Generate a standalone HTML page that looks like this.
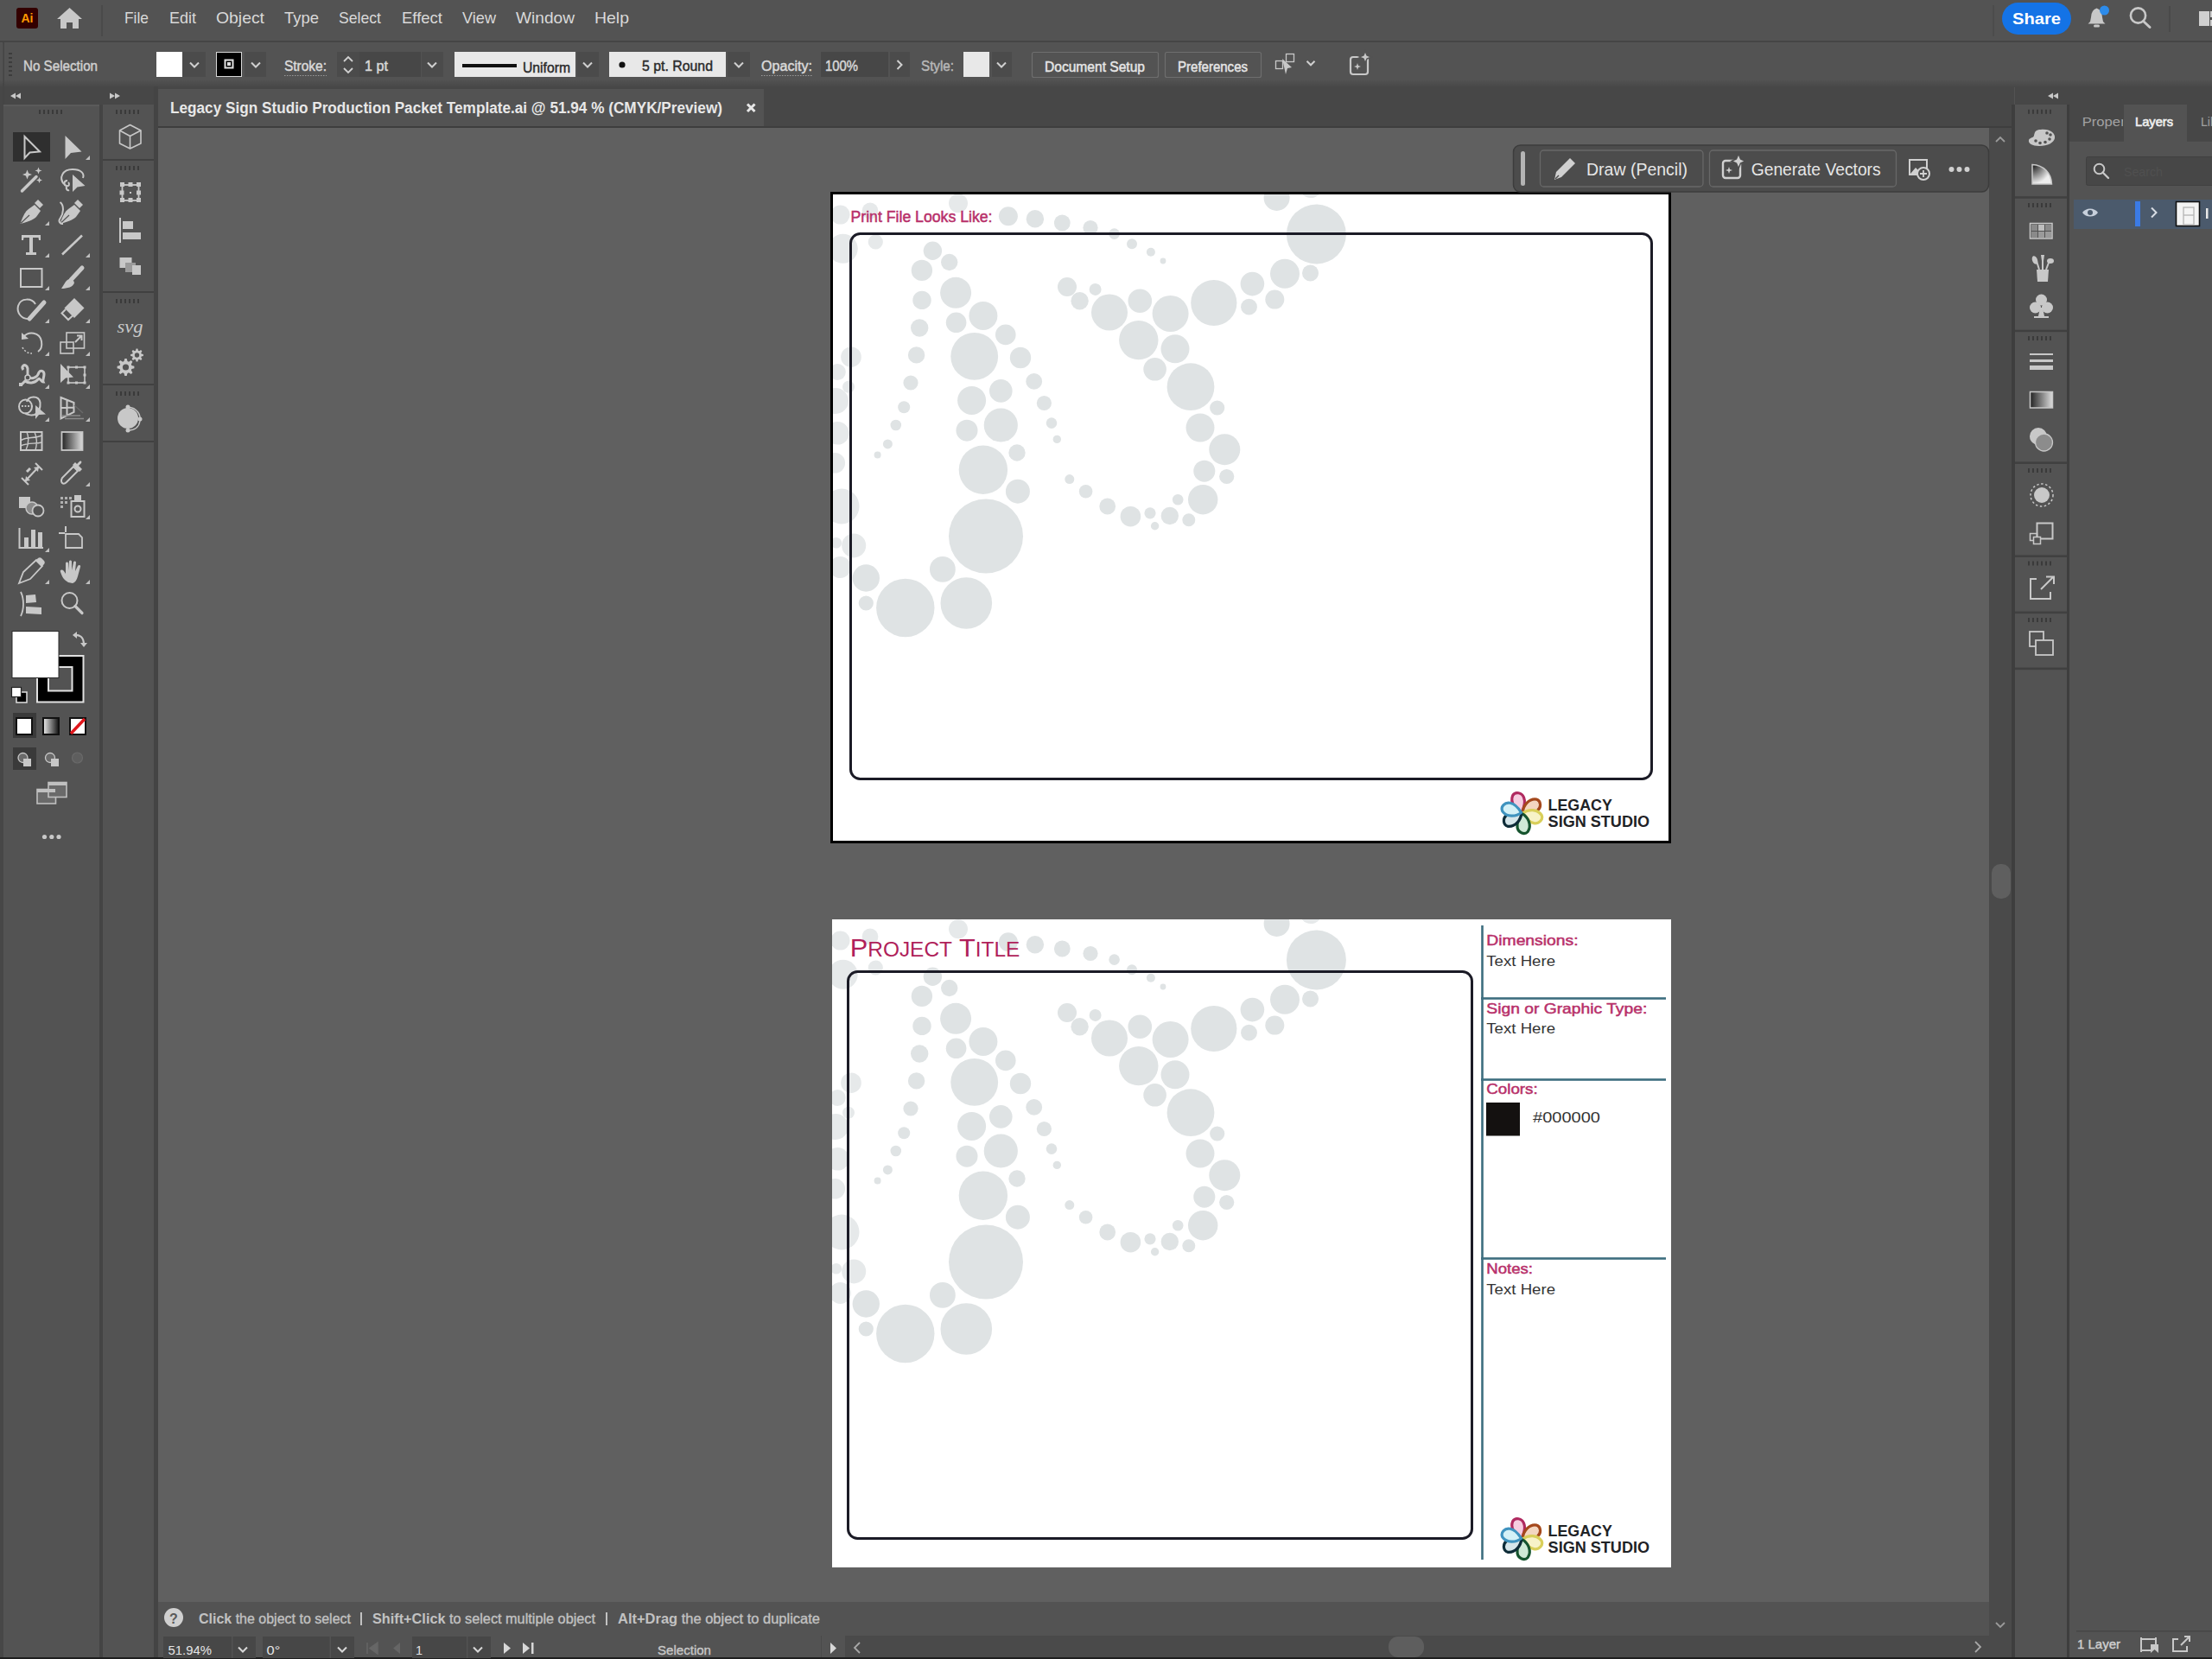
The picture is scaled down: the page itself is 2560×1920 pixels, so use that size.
<!DOCTYPE html>
<html><head><meta charset="utf-8"><title>Illustrator</title>
<style>
html,body{margin:0;padding:0;width:2560px;height:1920px;overflow:hidden;background:#535353}
svg{display:block;font-family:"Liberation Sans",sans-serif}
</style></head><body>
<svg width="2560" height="1920" viewBox="0 0 2560 1920">
<rect x="0" y="0" width="2560" height="47" fill="#535353" />
<rect x="0" y="47" width="2560" height="2" fill="#454545" />
<rect x="0" y="49" width="2560" height="52" fill="#535353" />
<defs><linearGradient id="cbg" x1="0" y1="0" x2="0" y2="1"><stop offset="0" stop-color="#535353"/><stop offset="1" stop-color="#474747"/></linearGradient></defs>
<rect x="0" y="92" width="2560" height="9" fill="url(#cbg)" />
<rect x="0" y="100" width="183" height="21" fill="#474747" />
<rect x="3" y="49" width="2" height="1871" fill="#454545" />
<rect x="0" y="121" width="4" height="1799" fill="#474747" />
<rect x="4" y="121" width="111" height="1799" fill="#535353" />
<rect x="115" y="121" width="4" height="1799" fill="#444444" />
<rect x="119" y="121" width="59" height="1799" fill="#535353" />
<rect x="178" y="100" width="5" height="1820" fill="#444444" />
<rect x="183" y="100" width="2148" height="48" fill="#474747" />
<rect x="183" y="103" width="701" height="44" fill="#535353" />
<rect x="183" y="146" width="2148" height="2" fill="#3e3e3e" />
<rect x="183" y="148" width="2119" height="1706" fill="#606060" />
<rect x="2302" y="148" width="27" height="1770" fill="#4a4a4a" />
<rect x="2328" y="121" width="4" height="1799" fill="#3e3e3e" />
<rect x="183" y="1854" width="2119" height="38" fill="#535353" />
<rect x="183" y="1892" width="2119" height="28" fill="#535353" />
<rect x="2332" y="100" width="228" height="21" fill="#474747" />
<rect x="2332" y="121" width="60" height="1799" fill="#535353" />
<rect x="2392" y="121" width="3" height="1799" fill="#3e3e3e" />
<rect x="2395" y="121" width="165" height="1799" fill="#535353" />
<rect x="0" y="1918" width="2560" height="2" fill="#1e1e1e" />
<rect x="19" y="9" width="25" height="24" rx="3" fill="#330000"/>
<text x="31.5" y="26" font-size="14" fill="#ff9a00" font-weight="bold" text-anchor="middle" >Ai</text>
<path d="M66 22 L80.5 9 L95 22 L91 22 L91 33 L84 33 L84 26 L77 26 L77 33 L70 33 L70 22 Z" fill="#c8c8c8"/>
<rect x="117" y="6" width="2" height="36" fill="#4a4a4a" />
<text x="144" y="27" font-size="19" fill="#d9d9d9" textLength="28" lengthAdjust="spacingAndGlyphs" >File</text>
<text x="196" y="27" font-size="19" fill="#d9d9d9" textLength="31" lengthAdjust="spacingAndGlyphs" >Edit</text>
<text x="250" y="27" font-size="19" fill="#d9d9d9" textLength="56" lengthAdjust="spacingAndGlyphs" >Object</text>
<text x="329" y="27" font-size="19" fill="#d9d9d9" textLength="40" lengthAdjust="spacingAndGlyphs" >Type</text>
<text x="392" y="27" font-size="19" fill="#d9d9d9" textLength="49" lengthAdjust="spacingAndGlyphs" >Select</text>
<text x="465" y="27" font-size="19" fill="#d9d9d9" textLength="47" lengthAdjust="spacingAndGlyphs" >Effect</text>
<text x="535" y="27" font-size="19" fill="#d9d9d9" textLength="39" lengthAdjust="spacingAndGlyphs" >View</text>
<text x="597" y="27" font-size="19" fill="#d9d9d9" textLength="68" lengthAdjust="spacingAndGlyphs" >Window</text>
<text x="688" y="27" font-size="19" fill="#d9d9d9" textLength="40" lengthAdjust="spacingAndGlyphs" >Help</text>
<rect x="2317" y="3" width="80" height="37" rx="18.5" fill="#1473e6"/>
<text x="2357" y="28" font-size="19" fill="#ffffff" font-weight="bold" text-anchor="middle" textLength="56" lengthAdjust="spacingAndGlyphs" >Share</text>
<rect x="2306" y="6" width="2" height="36" fill="#4c4c4c" />
<path d="M2426.5 9.5 Q2420 12 2420 20 L2419 25 L2416.5 27.5 L2436.5 27.5 L2434 25 L2433 20 Q2433 12 2426.5 9.5 Z" fill="#c8c8c8"/>
<rect x="2423" y="28.5" width="7" height="3" rx="1.5" fill="#c8c8c8"/>
<circle cx="2435.5" cy="12" r="5.5" fill="#2d8ceb"/>
<circle cx="2474.5" cy="18" r="8.6" fill="none" stroke="#c8c8c8" stroke-width="2.6"/>
<line x1="2480.5" y1="24.5" x2="2488" y2="31.5" stroke="#c8c8c8" stroke-width="3" stroke-linecap="round"/>
<rect x="2510" y="7" width="2" height="30" fill="#4a4a4a" />
<rect x="2545" y="13" width="12" height="17" fill="#d0d0d0" />
<rect x="2558" y="13" width="2" height="7" fill="#d0d0d0" />
<rect x="2558" y="23" width="2" height="7" fill="#d0d0d0" />
<rect x="3" y="50" width="1" height="46" fill="#4a4a4a" />
<rect x="10" y="61" width="4" height="2" fill="#3c3c3c" />
<rect x="10" y="66" width="4" height="2" fill="#3c3c3c" />
<rect x="10" y="71" width="4" height="2" fill="#3c3c3c" />
<rect x="10" y="76" width="4" height="2" fill="#3c3c3c" />
<rect x="10" y="81" width="4" height="2" fill="#3c3c3c" />
<rect x="10" y="86" width="4" height="2" fill="#3c3c3c" />
<text x="27" y="82" font-size="16" fill="#d0d0d0" textLength="86" lengthAdjust="spacingAndGlyphs" stroke="#d0d0d0" stroke-width="0.45" >No Selection</text>
<rect x="181" y="60" width="30" height="29" fill="#ffffff" />
<rect x="211" y="60" width="27" height="29" fill="#4b4b4b" />
<polyline points="220,72.5 225,77.5 230,72.5" fill="none" stroke="#d0d0d0" stroke-width="2"/>
<rect x="250.5" y="60.5" width="29" height="28" fill="#000" stroke="#d8d8d8" stroke-width="1"/>
<rect x="260.5" y="69.5" width="9" height="9" fill="none" stroke="#e0e0e0" stroke-width="2"/>
<rect x="263" y="72" width="4" height="4" fill="#e0e0e0" />
<rect x="283" y="60" width="25" height="29" fill="#4b4b4b" />
<polyline points="291,72.5 296,77.5 301,72.5" fill="none" stroke="#d0d0d0" stroke-width="2"/>
<text x="329" y="82" font-size="16" fill="#dadada" textLength="49" lengthAdjust="spacingAndGlyphs" stroke="#dadada" stroke-width="0.45" >Stroke:</text>
<line x1="329" y1="87.5" x2="378" y2="87.5" stroke="#9a9a9a" stroke-width="1" stroke-dasharray="1.5,1.5"/>
<rect x="390" y="60" width="26" height="29" fill="#4b4b4b" />
<polyline points="398,71 403,66 408,71" fill="none" stroke="#d0d0d0" stroke-width="1.8"/>
<polyline points="398,79 403,84 408,79" fill="none" stroke="#d0d0d0" stroke-width="1.8"/>
<rect x="416" y="60" width="71" height="29" fill="#474747" />
<text x="422" y="82" font-size="16" fill="#d8d8d8" textLength="27" lengthAdjust="spacingAndGlyphs" stroke="#d8d8d8" stroke-width="0.45" >1 pt</text>
<rect x="488" y="60" width="25" height="29" fill="#4b4b4b" />
<polyline points="495,72.5 500,77.5 505,72.5" fill="none" stroke="#d0d0d0" stroke-width="2"/>
<rect x="526" y="60" width="140" height="29" fill="#e8e8e8" />
<rect x="535" y="74" width="63" height="4" fill="#111111" />
<text x="605" y="84" font-size="17" fill="#2a2a2a" textLength="55" lengthAdjust="spacingAndGlyphs" stroke="#2a2a2a" stroke-width="0.45" >Uniform</text>
<rect x="668" y="60" width="25" height="29" fill="#4b4b4b" />
<polyline points="675,72.5 680,77.5 685,72.5" fill="none" stroke="#d0d0d0" stroke-width="2"/>
<rect x="705" y="60" width="135" height="29" fill="#e8e8e8" />
<circle cx="720" cy="75" r="3.6" fill="#111"/>
<text x="743" y="82" font-size="17" fill="#2a2a2a" textLength="82" lengthAdjust="spacingAndGlyphs" stroke="#2a2a2a" stroke-width="0.45" >5 pt. Round</text>
<rect x="842" y="60" width="26" height="29" fill="#4b4b4b" />
<polyline points="850,72.5 855,77.5 860,72.5" fill="none" stroke="#d0d0d0" stroke-width="2"/>
<text x="881" y="81.5" font-size="16" fill="#dadada" textLength="59" lengthAdjust="spacingAndGlyphs" stroke="#dadada" stroke-width="0.45" >Opacity:</text>
<line x1="881" y1="87.5" x2="940" y2="87.5" stroke="#9a9a9a" stroke-width="1" stroke-dasharray="1.5,1.5"/>
<rect x="950" y="60" width="78" height="29" fill="#474747" />
<text x="955" y="81.5" font-size="16" fill="#d8d8d8" textLength="38" lengthAdjust="spacingAndGlyphs" stroke="#d8d8d8" stroke-width="0.45" >100%</text>
<rect x="1030" y="60" width="23" height="29" fill="#4b4b4b" />
<polyline points="1038.5,70 1043.5,75 1038.5,80" fill="none" stroke="#d0d0d0" stroke-width="2"/>
<text x="1066" y="82" font-size="16" fill="#b8b8b8" textLength="38" lengthAdjust="spacingAndGlyphs" stroke="#b8b8b8" stroke-width="0.45" >Style:</text>
<rect x="1115" y="60" width="30" height="29" fill="#e8e8e8" />
<rect x="1148" y="60" width="23" height="29" fill="#4b4b4b" />
<polyline points="1154,72.5 1159,77.5 1164,72.5" fill="none" stroke="#d0d0d0" stroke-width="2"/>
<rect x="1194.5" y="60.5" width="146" height="29" rx="2" fill="none" stroke="#6e6e6e" stroke-width="1.2"/>
<text x="1209" y="83" font-size="16" fill="#e6e6e6" textLength="116" lengthAdjust="spacingAndGlyphs" stroke="#e6e6e6" stroke-width="0.45" >Document Setup</text>
<rect x="1348.5" y="60.5" width="111" height="29" rx="2" fill="none" stroke="#6e6e6e" stroke-width="1.2"/>
<text x="1363" y="83" font-size="16" fill="#e6e6e6" textLength="81" lengthAdjust="spacingAndGlyphs" stroke="#e6e6e6" stroke-width="0.45" >Preferences</text>
<rect x="1476.5" y="70.5" width="8" height="9" fill="none" stroke="#c8c8c8" stroke-width="1.3"/>
<rect x="1488.5" y="62.5" width="9" height="9" fill="none" stroke="#c8c8c8" stroke-width="1.3"/>
<path d="M1484 68 L1495 78 L1490 79 L1488 86 Z" fill="#c8c8c8"/>
<polyline points="1512.5,70.75 1517,75.25 1521.5,70.75" fill="none" stroke="#d0d0d0" stroke-width="2"/>
<rect x="1563" y="66" width="20" height="20" rx="3" fill="none" stroke="#c8c8c8" stroke-width="2.2"/>
<path d="M1580 59 L1582 64 L1587 66 L1582 68 L1580 73 L1578 68 L1573 66 L1578 64 Z" fill="#c8c8c8" stroke="#535353" stroke-width="1.5"/>
<path d="M1571 73 L1572 76 L1575 77 L1572 78 L1571 81 L1570 78 L1567 77 L1570 76 Z" fill="#c8c8c8"/>
<path d="M18 107.5 L12 111 L18 114.5 Z M24 107.5 L18 111 L24 114.5 Z" fill="#c8c8c8"/>
<path d="M127 107.5 L133 111 L127 114.5 Z M133 107.5 L139 111 L133 114.5 Z" fill="#c8c8c8"/>
<path d="M2376 107.5 L2370 111 L2376 114.5 Z M2382 107.5 L2376 111 L2382 114.5 Z" fill="#c8c8c8"/>
<text x="197" y="130.5" font-size="17.5" fill="#e8e8e8" font-weight="bold" textLength="639" lengthAdjust="spacingAndGlyphs" >Legacy Sign Studio Production Packet Template.ai @ 51.94 % (CMYK/Preview)</text>
<path d="M865 120.5 L873.5 129 M873.5 120.5 L865 129" stroke="#e8e8e8" stroke-width="3"/>
<rect x="4" y="121" width="111" height="2" fill="#5a5a5a" />
<rect x="45" y="127" width="2" height="5" fill="#3a3a3a"/><rect x="50" y="127" width="2" height="5" fill="#3a3a3a"/><rect x="55" y="127" width="2" height="5" fill="#3a3a3a"/><rect x="60" y="127" width="2" height="5" fill="#3a3a3a"/><rect x="65" y="127" width="2" height="5" fill="#3a3a3a"/><rect x="70" y="127" width="2" height="5" fill="#3a3a3a"/>
<rect x="15" y="153" width="43" height="34" fill="#2f2f2f" />
<path d="M28.5 158 L28.5 183 L34.5 176.5 L46 175.5 Z" fill="none" stroke="#c8c8c8" stroke-width="2" stroke-linejoin="miter"/>
<path d="M75.5 157 L75.5 184 L82 177 L94.5 175.5 Z" fill="#c8c8c8"/>
<path d="M104 185 L104 180 L99 185 Z" fill="#c0c0c0"/>
<line x1="25.5" y1="221" x2="42" y2="204.5" stroke="#c8c8c8" stroke-width="3.5" stroke-linecap="round"/>
<path d="M31.5 196.5 L33.04 200.46 L37.0 202 L33.04 203.54 L31.5 207.5 L29.96 203.54 L26.0 202 L29.96 200.46 Z" fill="#c8c8c8"/>
<path d="M44.5 193.5 L45.62 196.38 L48.5 197.5 L45.62 198.62 L44.5 201.5 L43.38 198.62 L40.5 197.5 L43.38 196.38 Z" fill="#c8c8c8"/>
<path d="M45.5 205.0 L46.48 207.52 L49.0 208.5 L46.48 209.48 L45.5 212.0 L44.52 209.48 L42.0 208.5 L44.52 207.52 Z" fill="#c8c8c8"/>
<path d="M74 213 C68 206 72 196 84 196 C94 196 98 201 96 206" fill="none" stroke="#c8c8c8" stroke-width="2"/>
<path d="M78 209 C74 209 73 214 77 215 C80 216 81 213 79 211 M77 215 C76 219 78 221 80 220" fill="none" stroke="#c8c8c8" stroke-width="2" stroke-width="1.8"/>
<path d="M84 202 L84 222 L89.5 216.5 L98.5 215 Z" fill="#c8c8c8"/>
<path d="M23.5 259 C26 251 29 245 33 242 L40 237 L47 244 L42 251 C38 255 31 257 23.5 259 Z" fill="#c8c8c8"/><path d="M40 235 L44 231 L50 237 L46 241 Z" fill="#c8c8c8"/><line x1="24" y1="258.5" x2="34" y2="249" stroke="#535353" stroke-width="1.2"/>
<path d="M57 261 L57 256 L52 261 Z" fill="#c0c0c0"/>
<path d="M69.5 259 C72 251 75 245 79 242 L86 237 L93 244 L88 251 C84 255 77 257 69.5 259 Z" fill="#c8c8c8"/><path d="M86 235 L90 231 L96 237 L92 241 Z" fill="#c8c8c8"/><line x1="70" y1="258.5" x2="80" y2="249" stroke="#535353" stroke-width="1.2"/>
<path d="M69.5 234 C75 238 73 248 70 252 C67 256 69 259 73 259" fill="none" stroke="#c8c8c8" stroke-width="2" stroke-width="1.8"/>
<path d="M25 272 L47 272 L47 278 L45 278 L44.5 275 L38 275 L38 292 L42 292 L42 295 L30 295 L30 292 L34 292 L34 275 L27.5 275 L27 278 L25 278 Z" fill="#c8c8c8"/>
<path d="M57 298 L57 293 L52 298 Z" fill="#c0c0c0"/>
<line x1="72" y1="294.5" x2="95" y2="272.5" stroke="#c8c8c8" stroke-width="2.6"/>
<path d="M104 298 L104 293 L99 298 Z" fill="#c0c0c0"/>
<rect x="24" y="311" width="24.5" height="21" fill="none" stroke="#c8c8c8" stroke-width="2"/>
<path d="M57 336 L57 331 L52 336 Z" fill="#c0c0c0"/>
<line x1="95" y1="310" x2="82" y2="324" stroke="#c8c8c8" stroke-width="5" stroke-linecap="round"/>
<path d="M71 334 L76 326 C79 322 84 322 86 327 C85 332 78 334 71 334 Z" fill="#c8c8c8"/>
<path d="M104 336 L104 331 L99 336 Z" fill="#c0c0c0"/>
<path d="M41 352 C37 345 24 344 21 354 C19 362 25 369 32 369" fill="none" stroke="#c8c8c8" stroke-width="2"/>
<line x1="51" y1="350" x2="34" y2="369" stroke="#c8c8c8" stroke-width="5" stroke-linecap="round"/>
<path d="M57 374 L57 369 L52 374 Z" fill="#c0c0c0"/>
<path d="M86 345 L97.5 356.5 L86 368 L74.5 356.5 Z" fill="#c8c8c8"/>
<path d="M76 358 L71.5 362.5 L79 370 L84 365.5" fill="none" stroke="#c8c8c8" stroke-width="2" stroke-width="1.8"/>
<path d="M104 374 L104 369 L99 374 Z" fill="#c0c0c0"/>
<path d="M27 390 C33 383 46 384 48 395 C49 401 47 405 44 407" fill="none" stroke="#c8c8c8" stroke-width="2"/>
<path d="M25 385 L25 393 L33 392 Z" fill="#c8c8c8"/>
<path d="M26 402 C28 406 32 409 37 409" fill="none" stroke="#c8c8c8" stroke-width="1.6" stroke-dasharray="2,2"/>
<path d="M57 412 L57 407 L52 412 Z" fill="#c0c0c0"/>
<rect x="70" y="396" width="15" height="13" fill="none" stroke="#c8c8c8" stroke-width="1.6"/>
<rect x="77" y="385" width="20.5" height="18" fill="none" stroke="#c8c8c8" stroke-width="1.6"/>
<path d="M87 396 L94 389 M89 388.5 L94.5 388.5 L94.5 394" fill="none" stroke="#c8c8c8" stroke-width="2" stroke-width="1.6"/>
<path d="M104 412 L104 407 L99 412 Z" fill="#c0c0c0"/>
<path d="M27 428 C24 424 28 421 31 424 C34 428 30 432 33 436 C37 440 44 436 45 431 C47 428 51 429 51 433 C51 437 49 440 50 442 C47 442 46 436 44 439 C40 444 33 444 29 441 L24 446" fill="none" stroke="#c8c8c8" stroke-width="3"/>
<circle cx="32" cy="437" r="3" fill="#535353" stroke="#c8c8c8" stroke-width="1.5"/>
<rect x="22" y="443" width="4" height="4" fill="#c8c8c8" />
<path d="M57 450 L57 445 L52 450 Z" fill="#c0c0c0"/>
<path d="M70 421 L70 443 L76 437.5 L85 436.5 Z" fill="#c8c8c8"/>
<rect x="79" y="425" width="19" height="18" fill="none" stroke="#c8c8c8" stroke-width="1.6"/>
<rect x="77.5" y="423.5" width="3" height="3" fill="#c8c8c8" />
<rect x="87.0" y="423.5" width="3" height="3" fill="#c8c8c8" />
<rect x="96.5" y="423.5" width="3" height="3" fill="#c8c8c8" />
<rect x="96.5" y="432.5" width="3" height="3" fill="#c8c8c8" />
<rect x="96.5" y="441.5" width="3" height="3" fill="#c8c8c8" />
<rect x="87.0" y="441.5" width="3" height="3" fill="#c8c8c8" />
<rect x="77.5" y="441.5" width="3" height="3" fill="#c8c8c8" />
<path d="M104 450 L104 445 L99 450 Z" fill="#c0c0c0"/>
<ellipse cx="29.5" cy="470.5" rx="7.5" ry="8" fill="none" stroke="#c8c8c8" stroke-width="2" stroke-width="1.6"/>
<path d="M31 465 C33 458 45 457 46.5 466 C47 472 46 477 40 480 C36 481 31 480 29 478" fill="none" stroke="#c8c8c8" stroke-width="2" stroke-width="1.6"/>
<path d="M25 470 L39 470" fill="none" stroke="#c8c8c8" stroke-width="1.8" stroke-dasharray="1.8,1.8"/>
<path d="M41 469 L41 485 L45 480 L53 479.5 Z" fill="#c8c8c8"/>
<path d="M57 488 L57 483 L52 488 Z" fill="#c0c0c0"/>
<path d="M70.5 460 L85.5 466 L85.5 477 L70.5 484.5 Z M77.5 463 L77.5 480.5 M70.5 472 L85.5 471.5" fill="none" stroke="#c8c8c8" stroke-width="2" stroke-width="1.6"/>
<path d="M72 481 L93 481 M75 484.5 L97 484.5" stroke="#8a8a8a" stroke-width="1.4"/>
<path d="M86 469 L96 478" stroke="#6a6a6a" stroke-width="1.4"/>
<path d="M104 488 L104 483 L99 488 Z" fill="#c0c0c0"/>
<rect x="24" y="500" width="24.5" height="21" fill="none" stroke="#c8c8c8" stroke-width="2"/>
<path d="M24 510 C30 505 40 508 48.5 504 M24 516 C32 512 40 514 48.5 512 M31 500 C34 507 33 514 30 521 M40 500 C43 507 43 514 41 521" fill="none" stroke="#c8c8c8" stroke-width="1.4"/>
<defs><linearGradient id="g1" x1="0" x2="1"><stop offset="0" stop-color="#222"/><stop offset="1" stop-color="#ddd"/></linearGradient><linearGradient id="g2" x1="0" x2="1"><stop offset="0" stop-color="#eee"/><stop offset="1" stop-color="#111"/></linearGradient><linearGradient id="g3" x1="0" x2="1" y1="0" y2="1"><stop offset="0" stop-color="#111"/><stop offset="1" stop-color="#eee"/></linearGradient></defs>
<rect x="71.5" y="500" width="24" height="21" fill="url(#g1)" stroke="#c8c8c8" stroke-width="1.8"/>
<path d="M25 553 L33 561 M41 536 L49 544 M29 557 L45 540" fill="none" stroke="#c8c8c8" stroke-width="2"/>
<path d="M45 540 L39 541 L44 546 Z M29 557 L35 556 L30 551 Z" fill="#c8c8c8"/>
<line x1="31" y1="546" x2="35" y2="542" stroke="#c8c8c8" stroke-width="3"/>
<path d="M72 559 C70 557 71 555 72 553 L85 540 L90 545 L77 558 C75 560 73 560 72 559 Z" fill="none" stroke="#c8c8c8" stroke-width="2" stroke-width="1.8"/>
<path d="M84 538 L92 546 L95 543 L91 539 L94 536 C95 534 94 533 92 534 L89 537 L87 535 Z" fill="#c8c8c8"/>
<path d="M104 563 L104 558 L99 563 Z" fill="#c0c0c0"/>
<rect x="22" y="575" width="13" height="13" fill="#c8c8c8" />
<circle cx="37" cy="588" r="7" fill="#8a8a8a" stroke="#c8c8c8" stroke-width="1.4"/>
<circle cx="44" cy="591" r="6.5" fill="#535353" stroke="#c8c8c8" stroke-width="1.8"/>
<rect x="70" y="575" width="3" height="3" fill="#b0b0b0" />
<rect x="75" y="575" width="3" height="3" fill="#b0b0b0" />
<rect x="80" y="575" width="3" height="3" fill="#b0b0b0" />
<rect x="70" y="580" width="3" height="3" fill="#b0b0b0" />
<rect x="75" y="580" width="3" height="3" fill="#b0b0b0" />
<rect x="70" y="585" width="3" height="3" fill="#b0b0b0" />
<rect x="82.5" y="580" width="15" height="18" fill="none" stroke="#c8c8c8" stroke-width="2" stroke-width="1.8"/>
<rect x="86" y="573" width="8" height="6" fill="#c8c8c8" />
<circle cx="90" cy="589" r="3.5" fill="none" stroke="#c8c8c8" stroke-width="2"/>
<path d="M104 601 L104 596 L99 601 Z" fill="#c0c0c0"/>
<path d="M22.5 611 L22.5 634 L50 634" fill="none" stroke="#c8c8c8" stroke-width="2"/>
<rect x="28" y="622" width="5" height="12" fill="#c8c8c8" />
<rect x="36" y="613" width="5" height="21" fill="#c8c8c8" />
<rect x="44" y="616" width="5" height="18" fill="#c8c8c8" />
<path d="M57 639 L57 634 L52 639 Z" fill="#c0c0c0"/>
<path d="M76 609 L76 616 M68 617 L75 617" fill="none" stroke="#c8c8c8" stroke-width="2"/>
<path d="M76 618 L91 618 L95 622 L95 634 L76 634 Z" fill="#5c5c5c" stroke="#c8c8c8" stroke-width="1.8"/>
<path d="M22 675 L27 662 L42 648 L49 655 L35 670 Z" fill="none" stroke="#c8c8c8" stroke-width="1.8"/>
<path d="M41 649 L44 646 C45 645 47 645 48 646 L51 649 C52 650 52 652 51 653 L48 656 Z" fill="#c8c8c8"/>
<path d="M57 676 L57 671 L52 676 Z" fill="#c0c0c0"/>
<path d="M79 674 C74 671 72 668 70 662 C69 659 72 659 74 661 L76 664 L76 652 C76 650 79 650 79 652 L79 660 L80 650 C80 648 83 648 83 650 L83 660 L85 651 C85 649 88 649 88 651 L87 661 L90 655 C91 653 94 654 93 656 L90 667 C89 671 87 674 84 675 Z" fill="#c8c8c8"/>
<path d="M104 676 L104 671 L99 676 Z" fill="#c0c0c0"/>
<path d="M24 685 C28 693 28 705 24 713" fill="none" stroke="#c8c8c8" stroke-width="1.8"/>
<path d="M30 689 L41 688 L42 697 L30 698 Z M30 702 L48 703 L48 711 L30 710 Z" fill="#c8c8c8"/>
<circle cx="80.5" cy="695" r="9" fill="none" stroke="#c8c8c8" stroke-width="2" stroke-width="2"/>
<line x1="87" y1="701.5" x2="95" y2="709.5" stroke="#c8c8c8" stroke-width="3.2" stroke-linecap="round"/>
<rect x="43" y="759" width="53.5" height="53.5" fill="#000" stroke="#e0e0e0" stroke-width="2"/>
<rect x="56" y="772" width="27.5" height="27.5" fill="#535353" stroke="#e0e0e0" stroke-width="2"/>
<rect x="14" y="730.5" width="54" height="54" fill="#ffffff" stroke="#2a2a2a" stroke-width="1"/>
<path d="M85 735 C92 734 97 737 97 746" fill="none" stroke="#c8c8c8" stroke-width="2.2"/>
<path d="M84 735 L89 731 L89 739 Z M97 749 L93 744 L101 744 Z" fill="#c8c8c8"/>
<rect x="19" y="801" width="12" height="12" fill="#000" stroke="#e0e0e0" stroke-width="1.5"/>
<rect x="13.5" y="795.5" width="11" height="11" fill="#fff" stroke="#222" stroke-width="1.2"/>
<rect x="15" y="825" width="27" height="29" fill="#3a3a3a" />
<rect x="19" y="831" width="18" height="19" fill="#fff" stroke="#111" stroke-width="2"/>
<rect x="50" y="831" width="18" height="19" fill="url(#g2)" stroke="#111" stroke-width="2"/>
<rect x="81" y="831" width="18" height="19" fill="#fff" stroke="#111" stroke-width="2"/>
<line x1="82" y1="849" x2="98" y2="832" stroke="#e0161b" stroke-width="3.5"/>
<rect x="15" y="865" width="27" height="26" fill="#3a3a3a" />
<circle cx="26.5" cy="877" r="5.5" fill="#6a6a6a" stroke="#c8c8c8" stroke-width="1.3"/>
<rect x="27" y="878" width="9" height="9" fill="#c8c8c8" />
<circle cx="58" cy="877" r="5.5" fill="#6a6a6a" stroke="#c8c8c8" stroke-width="1.3"/>
<rect x="59" y="878" width="9" height="9" fill="#c8c8c8" />
<circle cx="89.5" cy="877" r="6" fill="#5e5e5e" stroke="#6a6a6a" stroke-width="1.2"/>
<rect x="43" y="913.5" width="21.5" height="16.5" fill="#6a6a6a" stroke="#c0c0c0" stroke-width="1.6"/>
<rect x="56" y="905.5" width="21" height="17" fill="#6a6a6a" stroke="#c0c0c0" stroke-width="1.6"/>
<rect x="56" y="905" width="21" height="4" fill="#c0c0c0" />
<rect x="43" y="913" width="21" height="4" fill="#c0c0c0" />
<circle cx="51.5" cy="968.5" r="2.6" fill="#c8c8c8"/>
<circle cx="59.8" cy="968.5" r="2.6" fill="#c8c8c8"/>
<circle cx="68" cy="968.5" r="2.6" fill="#c8c8c8"/>
<rect x="119" y="121" width="59" height="63" fill="#535353" />
<rect x="119" y="184" width="59" height="2" fill="#404040" />
<rect x="134" y="127" width="2" height="5" fill="#3a3a3a"/><rect x="139" y="127" width="2" height="5" fill="#3a3a3a"/><rect x="144" y="127" width="2" height="5" fill="#3a3a3a"/><rect x="149" y="127" width="2" height="5" fill="#3a3a3a"/><rect x="154" y="127" width="2" height="5" fill="#3a3a3a"/><rect x="159" y="127" width="2" height="5" fill="#3a3a3a"/>
<rect x="119" y="186" width="59" height="151" fill="#535353" />
<rect x="119" y="337" width="59" height="2" fill="#404040" />
<rect x="134" y="192" width="2" height="5" fill="#3a3a3a"/><rect x="139" y="192" width="2" height="5" fill="#3a3a3a"/><rect x="144" y="192" width="2" height="5" fill="#3a3a3a"/><rect x="149" y="192" width="2" height="5" fill="#3a3a3a"/><rect x="154" y="192" width="2" height="5" fill="#3a3a3a"/><rect x="159" y="192" width="2" height="5" fill="#3a3a3a"/>
<rect x="119" y="340" width="59" height="104" fill="#535353" />
<rect x="119" y="444" width="59" height="2" fill="#404040" />
<rect x="134" y="346" width="2" height="5" fill="#3a3a3a"/><rect x="139" y="346" width="2" height="5" fill="#3a3a3a"/><rect x="144" y="346" width="2" height="5" fill="#3a3a3a"/><rect x="149" y="346" width="2" height="5" fill="#3a3a3a"/><rect x="154" y="346" width="2" height="5" fill="#3a3a3a"/><rect x="159" y="346" width="2" height="5" fill="#3a3a3a"/>
<rect x="119" y="447" width="59" height="63" fill="#535353" />
<rect x="119" y="510" width="59" height="2" fill="#404040" />
<rect x="134" y="453" width="2" height="5" fill="#3a3a3a"/><rect x="139" y="453" width="2" height="5" fill="#3a3a3a"/><rect x="144" y="453" width="2" height="5" fill="#3a3a3a"/><rect x="149" y="453" width="2" height="5" fill="#3a3a3a"/><rect x="154" y="453" width="2" height="5" fill="#3a3a3a"/><rect x="159" y="453" width="2" height="5" fill="#3a3a3a"/>
<path d="M150.5 144.5 L163 151 L163 166 L150.5 172 L138.5 166 L138.5 151 Z M138.5 151 L150.5 157.5 L163 151 M150.5 157.5 L150.5 172" fill="none" stroke="#c8c8c8" stroke-width="1.6" stroke-linejoin="round"/>
<rect x="141.5" y="214" width="19" height="18" fill="none" stroke="#c8c8c8" stroke-width="1.8"/>
<rect x="139.0" y="211" width="5" height="5" fill="#c8c8c8" />
<rect x="139.0" y="229" width="5" height="5" fill="#c8c8c8" />
<rect x="148.5" y="211" width="5" height="5" fill="#c8c8c8" />
<rect x="148.5" y="229" width="5" height="5" fill="#c8c8c8" />
<rect x="158.0" y="211" width="5" height="5" fill="#c8c8c8" />
<rect x="158.0" y="229" width="5" height="5" fill="#c8c8c8" />
<rect x="138.5" y="220.5" width="5" height="5" fill="#c8c8c8" />
<rect x="158" y="220.5" width="5" height="5" fill="#c8c8c8" />
<rect x="150" y="222" width="2" height="2" fill="#c8c8c8" />
<rect x="138" y="252" width="2" height="29" fill="#c8c8c8" />
<rect x="142" y="256" width="12" height="9" fill="#c8c8c8" />
<rect x="142" y="269" width="21" height="8" fill="#c8c8c8" />
<rect x="138.5" y="298" width="14" height="12" fill="#c8c8c8" />
<rect x="145" y="304" width="12" height="11" fill="#9a9a9a" />
<rect x="153" y="307" width="10" height="11" fill="#c8c8c8" />
<text x="150.5" y="385" font-size="22" fill="#c8c8c8" text-anchor="middle" textLength="30" lengthAdjust="spacingAndGlyphs" font-family="Liberation Serif" font-style="italic">svg</text>
<polygon points="155.4,423.8 155.4,426.2 152.4,427.0 151.8,428.5 153.4,431.2 151.7,432.9 149.0,431.3 147.5,431.9 146.7,434.9 144.3,434.9 143.5,431.9 142.0,431.3 139.3,432.9 137.6,431.2 139.2,428.5 138.6,427.0 135.6,426.2 135.6,423.8 138.6,423.0 139.2,421.5 137.6,418.8 139.3,417.1 142.0,418.7 143.5,418.1 144.3,415.1 146.7,415.1 147.5,418.1 149.0,418.7 151.7,417.1 153.4,418.8 151.8,421.5 152.4,423.0" fill="#c8c8c8"/><circle cx="145.5" cy="425" r="3.5999999999999996" fill="#535353"/>
<polygon points="165.9,410.1 165.9,411.9 163.7,412.5 163.2,413.6 164.4,415.6 163.1,416.9 161.1,415.7 160.0,416.2 159.4,418.4 157.6,418.4 157.0,416.2 155.9,415.7 153.9,416.9 152.6,415.6 153.8,413.6 153.3,412.5 151.1,411.9 151.1,410.1 153.3,409.5 153.8,408.4 152.6,406.4 153.9,405.1 155.9,406.3 157.0,405.8 157.6,403.6 159.4,403.6 160.0,405.8 161.1,406.3 163.1,405.1 164.4,406.4 163.2,408.4 163.7,409.5" fill="#c8c8c8"/><circle cx="158.5" cy="411" r="2.6999999999999997" fill="#535353"/>
<circle cx="148" cy="484" r="12" fill="#c8c8c8"/>
<path d="M148 470 C158 470 163 478 162 486 C161 493 156 498 148 498" fill="none" stroke="#535353" stroke-width="2"/>
<path d="M148 471 C159 472 163 480 162 487 C161 494 156 498 148 498" fill="none" stroke="#c8c8c8" stroke-width="1.4"/>
<circle cx="148" cy="471" r="2.5" fill="#c8c8c8"/><circle cx="162" cy="485" r="2.5" fill="#c8c8c8"/><circle cx="148" cy="498" r="2.5" fill="#c8c8c8"/>
<defs><clipPath id="ab1"><rect x="964" y="225" width="967" height="748"/></clipPath><clipPath id="ab2"><rect x="963" y="1064" width="971" height="750"/></clipPath></defs>
<rect x="961" y="222" width="973" height="754" fill="#000000" />
<rect x="964" y="225" width="967" height="748" fill="#ffffff" />
<g clip-path="url(#ab1)"><circle cx="969.4" cy="501.3" r="13.3" fill="#e6e9ea"/><circle cx="966.3" cy="535.8" r="11.8" fill="#e6e9ea"/><circle cx="974.1" cy="586" r="20.4" fill="#e6e9ea"/><circle cx="988.2" cy="631.4" r="14" fill="#e6e9ea"/><circle cx="967.8" cy="628.3" r="6.3" fill="#e6e9ea"/><circle cx="972.5" cy="656.5" r="12.5" fill="#e6e9ea"/><circle cx="975.7" cy="287.8" r="17" fill="#e6e9ea"/><circle cx="1013.3" cy="280" r="8.6" fill="#e6e9ea"/><circle cx="985" cy="413.2" r="11.8" fill="#e6e9ea"/><circle cx="969.4" cy="430.5" r="9.4" fill="#e6e9ea"/><circle cx="982" cy="447.7" r="7" fill="#e6e9ea"/><circle cx="967" cy="464" r="15" fill="#e6e9ea"/><circle cx="1109" cy="235.3" r="11" fill="#e6e9ea"/><circle cx="1007" cy="244" r="9.4" fill="#e6e9ea"/><circle cx="972.5" cy="248.6" r="11" fill="#e6e9ea"/><circle cx="1517" cy="216" r="13" fill="#e6e9ea"/><circle cx="1523.4" cy="271" r="34.5" fill="#dfe3e4"/><circle cx="1477.6" cy="229" r="15" fill="#dfe3e4"/><circle cx="1404.8" cy="350.5" r="26.6" fill="#dfe3e4"/><circle cx="1449.4" cy="328.6" r="13.8" fill="#dfe3e4"/><circle cx="1487" cy="316.8" r="17" fill="#dfe3e4"/><circle cx="1516.5" cy="316" r="9.5" fill="#dfe3e4"/><circle cx="1445.5" cy="355.2" r="9.4" fill="#dfe3e4"/><circle cx="1475.3" cy="346.6" r="11" fill="#dfe3e4"/><circle cx="1354.6" cy="363" r="21" fill="#dfe3e4"/><circle cx="1319.3" cy="348.2" r="13.8" fill="#dfe3e4"/><circle cx="1284" cy="361.5" r="21" fill="#dfe3e4"/><circle cx="1249.6" cy="348.2" r="10.2" fill="#dfe3e4"/><circle cx="1267.6" cy="334.9" r="7" fill="#dfe3e4"/><circle cx="1235" cy="332" r="11" fill="#dfe3e4"/><circle cx="1317.8" cy="393.6" r="22.7" fill="#dfe3e4"/><circle cx="1360" cy="403.8" r="16.5" fill="#dfe3e4"/><circle cx="1336.6" cy="427.3" r="13.3" fill="#dfe3e4"/><circle cx="1378" cy="447.7" r="27.4" fill="#dfe3e4"/><circle cx="1408.7" cy="472" r="8.6" fill="#dfe3e4"/><circle cx="1389" cy="495" r="16.5" fill="#dfe3e4"/><circle cx="1417.3" cy="520.2" r="18" fill="#dfe3e4"/><circle cx="1393.8" cy="545.2" r="12.5" fill="#dfe3e4"/><circle cx="1419.7" cy="551.5" r="8.6" fill="#dfe3e4"/><circle cx="1392.2" cy="578.2" r="17.2" fill="#dfe3e4"/><circle cx="1363.2" cy="578.2" r="6.3" fill="#dfe3e4"/><circle cx="1375.8" cy="601.7" r="7.5" fill="#dfe3e4"/><circle cx="1353.8" cy="597" r="10.2" fill="#dfe3e4"/><circle cx="1331" cy="593.8" r="6.6" fill="#dfe3e4"/><circle cx="1336.6" cy="608.7" r="4.7" fill="#dfe3e4"/><circle cx="1308.4" cy="597.7" r="11.8" fill="#dfe3e4"/><circle cx="1281.7" cy="586" r="9.4" fill="#dfe3e4"/><circle cx="1256.6" cy="568.7" r="7.8" fill="#dfe3e4"/><circle cx="1237.8" cy="554.6" r="5.5" fill="#dfe3e4"/><circle cx="1166.9" cy="250.2" r="11" fill="#dfe3e4"/><circle cx="1197.9" cy="253.3" r="10.2" fill="#dfe3e4"/><circle cx="1229.3" cy="258" r="9.4" fill="#dfe3e4"/><circle cx="1262" cy="263.5" r="8.6" fill="#dfe3e4"/><circle cx="1289.6" cy="270.6" r="6.3" fill="#dfe3e4"/><circle cx="1310" cy="282.3" r="6" fill="#dfe3e4"/><circle cx="1331.9" cy="291.7" r="5" fill="#dfe3e4"/><circle cx="1346" cy="302" r="3.4" fill="#dfe3e4"/><circle cx="1079.4" cy="290.2" r="10.7" fill="#dfe3e4"/><circle cx="1098.7" cy="303.5" r="9.7" fill="#dfe3e4"/><circle cx="1066.9" cy="312.9" r="12.2" fill="#dfe3e4"/><circle cx="1106.1" cy="338.8" r="18" fill="#dfe3e4"/><circle cx="1067" cy="347.4" r="10.7" fill="#dfe3e4"/><circle cx="1137.9" cy="365.4" r="16.5" fill="#dfe3e4"/><circle cx="1106.6" cy="373.3" r="11.8" fill="#dfe3e4"/><circle cx="1064.2" cy="379.5" r="10.2" fill="#dfe3e4"/><circle cx="1163.8" cy="387.4" r="11.8" fill="#dfe3e4"/><circle cx="1127.7" cy="412.4" r="27.4" fill="#dfe3e4"/><circle cx="1181" cy="414" r="12.2" fill="#dfe3e4"/><circle cx="1060.6" cy="410.9" r="9.7" fill="#dfe3e4"/><circle cx="1054" cy="443" r="8.6" fill="#dfe3e4"/><circle cx="1196.7" cy="441.4" r="9.4" fill="#dfe3e4"/><circle cx="1124.6" cy="463.4" r="16.5" fill="#dfe3e4"/><circle cx="1158.3" cy="452.4" r="13.3" fill="#dfe3e4"/><circle cx="1208.4" cy="466.5" r="8.6" fill="#dfe3e4"/><circle cx="1046.2" cy="471.2" r="7" fill="#dfe3e4"/><circle cx="1158.3" cy="492" r="19.6" fill="#dfe3e4"/><circle cx="1119" cy="498.2" r="12.5" fill="#dfe3e4"/><circle cx="1137.9" cy="543.7" r="28.2" fill="#dfe3e4"/><circle cx="1177" cy="524" r="9.7" fill="#dfe3e4"/><circle cx="1177.9" cy="568.7" r="14" fill="#dfe3e4"/><circle cx="1141" cy="620.5" r="43" fill="#dfe3e4"/><circle cx="1090.9" cy="658.9" r="14.9" fill="#dfe3e4"/><circle cx="1118.3" cy="698" r="29.8" fill="#dfe3e4"/><circle cx="1047.8" cy="703.5" r="33.7" fill="#dfe3e4"/><circle cx="1002.3" cy="669" r="15.7" fill="#dfe3e4"/><circle cx="1002.3" cy="698" r="8.6" fill="#dfe3e4"/><circle cx="1036.8" cy="492" r="6.3" fill="#dfe3e4"/><circle cx="1027.4" cy="513.9" r="5.5" fill="#dfe3e4"/><circle cx="1015.6" cy="526.4" r="4" fill="#dfe3e4"/><circle cx="1217" cy="489.6" r="6.3" fill="#dfe3e4"/><circle cx="1223.3" cy="508.4" r="4.7" fill="#dfe3e4"/></g>
<rect x="984.5" y="270.5" width="927" height="631" rx="11" fill="none" stroke="#1b1b26" stroke-width="3"/>
<text x="984.5" y="257" font-size="17.5" fill="#b8306a" textLength="164" lengthAdjust="spacingAndGlyphs" stroke="#b8306a" stroke-width="0.5" >Print File Looks Like:</text>
<g transform="translate(1761.5,940.7) rotate(-103)"><path d="M1 0 C5 -7 15 -11 22 -6 C26 -2 23 5 17 6 C11 7 6 4 1 0 Z" fill="#f6cde0" stroke="#b02a60" stroke-width="3.2" stroke-linejoin="round"/></g><g transform="translate(1761.5,940.7) rotate(-28)"><path d="M1 0 C5 -7 15 -11 22 -6 C26 -2 23 5 17 6 C11 7 6 4 1 0 Z" fill="#f3d6c0" stroke="#a4481c" stroke-width="3.2" stroke-linejoin="round"/></g><g transform="translate(1761.5,940.7) rotate(22)"><path d="M1 0 C5 -7 15 -11 22 -6 C26 -2 23 5 17 6 C11 7 6 4 1 0 Z" fill="#f7f2c8" stroke="#d9cf5a" stroke-width="3.2" stroke-linejoin="round"/></g><g transform="translate(1761.5,940.7) rotate(88)"><path d="M1 0 C5 -7 15 -11 22 -6 C26 -2 23 5 17 6 C11 7 6 4 1 0 Z" fill="#cfe9d6" stroke="#16542e" stroke-width="3.2" stroke-linejoin="round"/></g><g transform="translate(1761.5,940.7) rotate(152)"><path d="M1 0 C5 -7 15 -11 22 -6 C26 -2 23 5 17 6 C11 7 6 4 1 0 Z" fill="#d6e6ea" stroke="#0f2c38" stroke-width="3.2" stroke-linejoin="round"/></g><g transform="translate(1761.5,940.7) rotate(200)"><path d="M1 0 C5 -7 15 -11 22 -6 C26 -2 23 5 17 6 C11 7 6 4 1 0 Z" fill="#d4f1f7" stroke="#3f93bf" stroke-width="3.2" stroke-linejoin="round"/></g><text x="1791.6" y="937.8" font-size="18.7" fill="#1f2326" font-weight="bold" textLength="74.2" lengthAdjust="spacingAndGlyphs" >LEGACY</text><text x="1791.6" y="957.2" font-size="18.7" fill="#1f2326" font-weight="bold" textLength="117.4" lengthAdjust="spacingAndGlyphs" >SIGN STUDIO</text>
<rect x="963" y="1064" width="971" height="750" fill="#ffffff" />
<g clip-path="url(#ab2)"><circle cx="969.4" cy="1341.3" r="13.3" fill="#e6e9ea"/><circle cx="966.3" cy="1375.8" r="11.8" fill="#e6e9ea"/><circle cx="974.1" cy="1426" r="20.4" fill="#e6e9ea"/><circle cx="988.2" cy="1471.4" r="14" fill="#e6e9ea"/><circle cx="967.8" cy="1468.3" r="6.3" fill="#e6e9ea"/><circle cx="972.5" cy="1496.5" r="12.5" fill="#e6e9ea"/><circle cx="975.7" cy="1127.8" r="17" fill="#e6e9ea"/><circle cx="1013.3" cy="1120" r="8.6" fill="#e6e9ea"/><circle cx="985" cy="1253.2" r="11.8" fill="#e6e9ea"/><circle cx="969.4" cy="1270.5" r="9.4" fill="#e6e9ea"/><circle cx="982" cy="1287.7" r="7" fill="#e6e9ea"/><circle cx="967" cy="1304" r="15" fill="#e6e9ea"/><circle cx="1109" cy="1075.3" r="11" fill="#e6e9ea"/><circle cx="1007" cy="1084" r="9.4" fill="#e6e9ea"/><circle cx="972.5" cy="1088.6" r="11" fill="#e6e9ea"/><circle cx="1517" cy="1056" r="13" fill="#e6e9ea"/><circle cx="1523.4" cy="1111" r="34.5" fill="#dfe3e4"/><circle cx="1477.6" cy="1069" r="15" fill="#dfe3e4"/><circle cx="1404.8" cy="1190.5" r="26.6" fill="#dfe3e4"/><circle cx="1449.4" cy="1168.6" r="13.8" fill="#dfe3e4"/><circle cx="1487" cy="1156.8" r="17" fill="#dfe3e4"/><circle cx="1516.5" cy="1156" r="9.5" fill="#dfe3e4"/><circle cx="1445.5" cy="1195.2" r="9.4" fill="#dfe3e4"/><circle cx="1475.3" cy="1186.6" r="11" fill="#dfe3e4"/><circle cx="1354.6" cy="1203" r="21" fill="#dfe3e4"/><circle cx="1319.3" cy="1188.2" r="13.8" fill="#dfe3e4"/><circle cx="1284" cy="1201.5" r="21" fill="#dfe3e4"/><circle cx="1249.6" cy="1188.2" r="10.2" fill="#dfe3e4"/><circle cx="1267.6" cy="1174.9" r="7" fill="#dfe3e4"/><circle cx="1235" cy="1172" r="11" fill="#dfe3e4"/><circle cx="1317.8" cy="1233.6" r="22.7" fill="#dfe3e4"/><circle cx="1360" cy="1243.8" r="16.5" fill="#dfe3e4"/><circle cx="1336.6" cy="1267.3" r="13.3" fill="#dfe3e4"/><circle cx="1378" cy="1287.7" r="27.4" fill="#dfe3e4"/><circle cx="1408.7" cy="1312" r="8.6" fill="#dfe3e4"/><circle cx="1389" cy="1335" r="16.5" fill="#dfe3e4"/><circle cx="1417.3" cy="1360.2" r="18" fill="#dfe3e4"/><circle cx="1393.8" cy="1385.2" r="12.5" fill="#dfe3e4"/><circle cx="1419.7" cy="1391.5" r="8.6" fill="#dfe3e4"/><circle cx="1392.2" cy="1418.2" r="17.2" fill="#dfe3e4"/><circle cx="1363.2" cy="1418.2" r="6.3" fill="#dfe3e4"/><circle cx="1375.8" cy="1441.7" r="7.5" fill="#dfe3e4"/><circle cx="1353.8" cy="1437" r="10.2" fill="#dfe3e4"/><circle cx="1331" cy="1433.8" r="6.6" fill="#dfe3e4"/><circle cx="1336.6" cy="1448.7" r="4.7" fill="#dfe3e4"/><circle cx="1308.4" cy="1437.7" r="11.8" fill="#dfe3e4"/><circle cx="1281.7" cy="1426" r="9.4" fill="#dfe3e4"/><circle cx="1256.6" cy="1408.7" r="7.8" fill="#dfe3e4"/><circle cx="1237.8" cy="1394.6" r="5.5" fill="#dfe3e4"/><circle cx="1166.9" cy="1090.2" r="11" fill="#dfe3e4"/><circle cx="1197.9" cy="1093.3" r="10.2" fill="#dfe3e4"/><circle cx="1229.3" cy="1098" r="9.4" fill="#dfe3e4"/><circle cx="1262" cy="1103.5" r="8.6" fill="#dfe3e4"/><circle cx="1289.6" cy="1110.6" r="6.3" fill="#dfe3e4"/><circle cx="1310" cy="1122.3" r="6" fill="#dfe3e4"/><circle cx="1331.9" cy="1131.7" r="5" fill="#dfe3e4"/><circle cx="1346" cy="1142" r="3.4" fill="#dfe3e4"/><circle cx="1079.4" cy="1130.2" r="10.7" fill="#dfe3e4"/><circle cx="1098.7" cy="1143.5" r="9.7" fill="#dfe3e4"/><circle cx="1066.9" cy="1152.9" r="12.2" fill="#dfe3e4"/><circle cx="1106.1" cy="1178.8" r="18" fill="#dfe3e4"/><circle cx="1067" cy="1187.4" r="10.7" fill="#dfe3e4"/><circle cx="1137.9" cy="1205.4" r="16.5" fill="#dfe3e4"/><circle cx="1106.6" cy="1213.3" r="11.8" fill="#dfe3e4"/><circle cx="1064.2" cy="1219.5" r="10.2" fill="#dfe3e4"/><circle cx="1163.8" cy="1227.4" r="11.8" fill="#dfe3e4"/><circle cx="1127.7" cy="1252.4" r="27.4" fill="#dfe3e4"/><circle cx="1181" cy="1254" r="12.2" fill="#dfe3e4"/><circle cx="1060.6" cy="1250.9" r="9.7" fill="#dfe3e4"/><circle cx="1054" cy="1283" r="8.6" fill="#dfe3e4"/><circle cx="1196.7" cy="1281.4" r="9.4" fill="#dfe3e4"/><circle cx="1124.6" cy="1303.4" r="16.5" fill="#dfe3e4"/><circle cx="1158.3" cy="1292.4" r="13.3" fill="#dfe3e4"/><circle cx="1208.4" cy="1306.5" r="8.6" fill="#dfe3e4"/><circle cx="1046.2" cy="1311.2" r="7" fill="#dfe3e4"/><circle cx="1158.3" cy="1332" r="19.6" fill="#dfe3e4"/><circle cx="1119" cy="1338.2" r="12.5" fill="#dfe3e4"/><circle cx="1137.9" cy="1383.7" r="28.2" fill="#dfe3e4"/><circle cx="1177" cy="1364" r="9.7" fill="#dfe3e4"/><circle cx="1177.9" cy="1408.7" r="14" fill="#dfe3e4"/><circle cx="1141" cy="1460.5" r="43" fill="#dfe3e4"/><circle cx="1090.9" cy="1498.9" r="14.9" fill="#dfe3e4"/><circle cx="1118.3" cy="1538" r="29.8" fill="#dfe3e4"/><circle cx="1047.8" cy="1543.5" r="33.7" fill="#dfe3e4"/><circle cx="1002.3" cy="1509" r="15.7" fill="#dfe3e4"/><circle cx="1002.3" cy="1538" r="8.6" fill="#dfe3e4"/><circle cx="1036.8" cy="1332" r="6.3" fill="#dfe3e4"/><circle cx="1027.4" cy="1353.9" r="5.5" fill="#dfe3e4"/><circle cx="1015.6" cy="1366.4" r="4" fill="#dfe3e4"/><circle cx="1217" cy="1329.6" r="6.3" fill="#dfe3e4"/><circle cx="1223.3" cy="1348.4" r="4.7" fill="#dfe3e4"/></g>
<rect x="981.5" y="1124.5" width="722" height="656" rx="11" fill="none" stroke="#1b1b26" stroke-width="3"/>
<text x="983.7" y="1106.6" fill="#b01f5a" font-size="29.6" textLength="196.7" lengthAdjust="spacingAndGlyphs">P<tspan font-size="23.5">ROJECT</tspan> T<tspan font-size="23.5">ITLE</tspan></text>
<rect x="1714.2" y="1071" width="2.6" height="734" fill="#3d6e7f" />
<rect x="1714" y="1154.2" width="214" height="2.6" fill="#3d6e7f" />
<rect x="1714" y="1248.2" width="214" height="2.6" fill="#3d6e7f" />
<rect x="1714" y="1455.2" width="214" height="2.6" fill="#3d6e7f" />
<text x="1720.3" y="1094" font-size="17" fill="#b8306a" textLength="106.3" lengthAdjust="spacingAndGlyphs" stroke="#b8306a" stroke-width="0.5" >Dimensions:</text>
<text x="1720.3" y="1117.6" font-size="16.5" fill="#333333" textLength="79.7" lengthAdjust="spacingAndGlyphs" >Text Here</text>
<text x="1720.3" y="1172.5" font-size="17" fill="#b8306a" textLength="186" lengthAdjust="spacingAndGlyphs" stroke="#b8306a" stroke-width="0.5" >Sign or Graphic Type:</text>
<text x="1720.3" y="1196.2" font-size="16.5" fill="#333333" textLength="79.7" lengthAdjust="spacingAndGlyphs" >Text Here</text>
<text x="1720.3" y="1266" font-size="17" fill="#b8306a" textLength="59.4" lengthAdjust="spacingAndGlyphs" stroke="#b8306a" stroke-width="0.5" >Colors:</text>
<rect x="1720" y="1276" width="39" height="38.5" fill="#141110" />
<text x="1774" y="1299" font-size="17" fill="#333333" textLength="78" lengthAdjust="spacingAndGlyphs" >#000000</text>
<text x="1720.3" y="1473.5" font-size="17" fill="#b8306a" textLength="53.7" lengthAdjust="spacingAndGlyphs" stroke="#b8306a" stroke-width="0.5" >Notes:</text>
<text x="1720.3" y="1497.8" font-size="16.5" fill="#333333" textLength="79.7" lengthAdjust="spacingAndGlyphs" >Text Here</text>
<g transform="translate(1761.5,1780.7) rotate(-103)"><path d="M1 0 C5 -7 15 -11 22 -6 C26 -2 23 5 17 6 C11 7 6 4 1 0 Z" fill="#f6cde0" stroke="#b02a60" stroke-width="3.2" stroke-linejoin="round"/></g><g transform="translate(1761.5,1780.7) rotate(-28)"><path d="M1 0 C5 -7 15 -11 22 -6 C26 -2 23 5 17 6 C11 7 6 4 1 0 Z" fill="#f3d6c0" stroke="#a4481c" stroke-width="3.2" stroke-linejoin="round"/></g><g transform="translate(1761.5,1780.7) rotate(22)"><path d="M1 0 C5 -7 15 -11 22 -6 C26 -2 23 5 17 6 C11 7 6 4 1 0 Z" fill="#f7f2c8" stroke="#d9cf5a" stroke-width="3.2" stroke-linejoin="round"/></g><g transform="translate(1761.5,1780.7) rotate(88)"><path d="M1 0 C5 -7 15 -11 22 -6 C26 -2 23 5 17 6 C11 7 6 4 1 0 Z" fill="#cfe9d6" stroke="#16542e" stroke-width="3.2" stroke-linejoin="round"/></g><g transform="translate(1761.5,1780.7) rotate(152)"><path d="M1 0 C5 -7 15 -11 22 -6 C26 -2 23 5 17 6 C11 7 6 4 1 0 Z" fill="#d6e6ea" stroke="#0f2c38" stroke-width="3.2" stroke-linejoin="round"/></g><g transform="translate(1761.5,1780.7) rotate(200)"><path d="M1 0 C5 -7 15 -11 22 -6 C26 -2 23 5 17 6 C11 7 6 4 1 0 Z" fill="#d4f1f7" stroke="#3f93bf" stroke-width="3.2" stroke-linejoin="round"/></g><text x="1791.6" y="1777.8" font-size="18.7" fill="#1f2326" font-weight="bold" textLength="74.2" lengthAdjust="spacingAndGlyphs" >LEGACY</text><text x="1791.6" y="1797.2" font-size="18.7" fill="#1f2326" font-weight="bold" textLength="117.4" lengthAdjust="spacingAndGlyphs" >SIGN STUDIO</text>
<rect x="1751.5" y="168" width="550" height="54" rx="8" fill="#4c4c4c" stroke="#3c3c3c" stroke-width="1.5"/>
<rect x="1760" y="175" width="5" height="40" rx="2.5" fill="#b4b4b4"/>
<rect x="1782.5" y="174" width="188.5" height="42" rx="4" fill="#4c4c4c" stroke="#686868" stroke-width="1.3"/>
<path d="M1799 208 L1801 199 L1817 183 L1823 189 L1807 205 Z" fill="#d0d0d0"/><path d="M1800 207 L1804 203" stroke="#4c4c4c" stroke-width="1.5"/>
<text x="1836" y="203.3" font-size="20" fill="#e6e6e6" textLength="117" lengthAdjust="spacingAndGlyphs" >Draw (Pencil)</text>
<rect x="1978.5" y="174" width="216" height="42" rx="4" fill="#4c4c4c" stroke="#686868" stroke-width="1.3"/>
<rect x="1994" y="186" width="20" height="20" rx="3" fill="none" stroke="#d0d0d0" stroke-width="2.4"/>
<path d="M2012 178 L2014.5 184 L2020 186.5 L2014.5 189 L2012 195 L2009.5 189 L2004 186.5 L2009.5 184 Z" fill="#d0d0d0" stroke="#4c4c4c" stroke-width="1.5"/>
<path d="M2001 193 L2002 196 L2005 197 L2002 198 L2001 201 L2000 198 L1997 197 L2000 196 Z" fill="#d0d0d0"/>
<text x="2026.7" y="203.3" font-size="20" fill="#e6e6e6" textLength="150" lengthAdjust="spacingAndGlyphs" >Generate Vectors</text>
<rect x="2210" y="185" width="20" height="17" fill="none" stroke="#d0d0d0" stroke-width="2"/><path d="M2211 201 L2217 194 L2221 198 L2223 196 L2229 201 Z" fill="#d0d0d0"/>
<circle cx="2226" cy="201" r="7" fill="#4c4c4c" stroke="#d0d0d0" stroke-width="2"/><path d="M2226 197 L2226 205 M2222 201 L2230 201" stroke="#d0d0d0" stroke-width="1.8"/>
<circle cx="2258.5" cy="196" r="3" fill="#d0d0d0"/>
<circle cx="2267.5" cy="196" r="3" fill="#d0d0d0"/>
<circle cx="2276.5" cy="196" r="3" fill="#d0d0d0"/>
<rect x="2305" y="1000" width="22" height="40" rx="10" fill="#5f5f5f"/>
<polyline points="2310,164 2315,159 2320,164" fill="none" stroke="#9a9a9a" stroke-width="1.8"/>
<polyline points="2310,1878 2315,1883 2320,1878" fill="none" stroke="#9a9a9a" stroke-width="1.8"/>
<rect x="2332" y="227.2" width="60" height="2.5" fill="#404040" />
<rect x="2347" y="126.75" width="2" height="5" fill="#3a3a3a"/><rect x="2352" y="126.75" width="2" height="5" fill="#3a3a3a"/><rect x="2357" y="126.75" width="2" height="5" fill="#3a3a3a"/><rect x="2362" y="126.75" width="2" height="5" fill="#3a3a3a"/><rect x="2367" y="126.75" width="2" height="5" fill="#3a3a3a"/><rect x="2372" y="126.75" width="2" height="5" fill="#3a3a3a"/>
<rect x="2332" y="381.7" width="60" height="2.5" fill="#404040" />
<rect x="2347" y="235" width="2" height="5" fill="#3a3a3a"/><rect x="2352" y="235" width="2" height="5" fill="#3a3a3a"/><rect x="2357" y="235" width="2" height="5" fill="#3a3a3a"/><rect x="2362" y="235" width="2" height="5" fill="#3a3a3a"/><rect x="2367" y="235" width="2" height="5" fill="#3a3a3a"/><rect x="2372" y="235" width="2" height="5" fill="#3a3a3a"/>
<rect x="2332" y="534.4" width="60" height="2.5" fill="#404040" />
<rect x="2347" y="389" width="2" height="5" fill="#3a3a3a"/><rect x="2352" y="389" width="2" height="5" fill="#3a3a3a"/><rect x="2357" y="389" width="2" height="5" fill="#3a3a3a"/><rect x="2362" y="389" width="2" height="5" fill="#3a3a3a"/><rect x="2367" y="389" width="2" height="5" fill="#3a3a3a"/><rect x="2372" y="389" width="2" height="5" fill="#3a3a3a"/>
<rect x="2332" y="642.4" width="60" height="2.5" fill="#404040" />
<rect x="2347" y="542" width="2" height="5" fill="#3a3a3a"/><rect x="2352" y="542" width="2" height="5" fill="#3a3a3a"/><rect x="2357" y="542" width="2" height="5" fill="#3a3a3a"/><rect x="2362" y="542" width="2" height="5" fill="#3a3a3a"/><rect x="2367" y="542" width="2" height="5" fill="#3a3a3a"/><rect x="2372" y="542" width="2" height="5" fill="#3a3a3a"/>
<rect x="2332" y="707.6" width="60" height="2.5" fill="#404040" />
<rect x="2347" y="649.5" width="2" height="5" fill="#3a3a3a"/><rect x="2352" y="649.5" width="2" height="5" fill="#3a3a3a"/><rect x="2357" y="649.5" width="2" height="5" fill="#3a3a3a"/><rect x="2362" y="649.5" width="2" height="5" fill="#3a3a3a"/><rect x="2367" y="649.5" width="2" height="5" fill="#3a3a3a"/><rect x="2372" y="649.5" width="2" height="5" fill="#3a3a3a"/>
<rect x="2332" y="772.6" width="60" height="2.5" fill="#404040" />
<rect x="2347" y="715" width="2" height="5" fill="#3a3a3a"/><rect x="2352" y="715" width="2" height="5" fill="#3a3a3a"/><rect x="2357" y="715" width="2" height="5" fill="#3a3a3a"/><rect x="2362" y="715" width="2" height="5" fill="#3a3a3a"/><rect x="2367" y="715" width="2" height="5" fill="#3a3a3a"/><rect x="2372" y="715" width="2" height="5" fill="#3a3a3a"/>
<path d="M2362 150 C2372 149 2379 154 2378 160 C2377 165 2370 169 2360 169 C2352 169 2347 166 2348 162 C2349 159 2353 160 2354 157 C2355 152 2356 150 2362 150 Z" fill="#c8c8c8"/>
<circle cx="2356" cy="163" r="1.8" fill="#535353"/>
<circle cx="2361" cy="165.5" r="1.8" fill="#535353"/>
<circle cx="2367" cy="164.5" r="1.8" fill="#535353"/>
<circle cx="2372" cy="161" r="1.8" fill="#535353"/>
<circle cx="2373" cy="156" r="1.8" fill="#535353"/>
<circle cx="2369" cy="154" r="1.8" fill="#535353"/>
<defs><radialGradient id="rg1" cx="0" cy="0" r="1" gradientUnits="objectBoundingBox"><stop offset="0" stop-color="#111"/><stop offset="1" stop-color="#eee"/></radialGradient></defs>
<path d="M2352 190.5 C2365 191 2374 200 2374.5 213 L2352 213 Z" fill="url(#rg1)" stroke="#c8c8c8" stroke-width="1.5"/>
<rect x="2349.5" y="258.5" width="25.5" height="17.5" fill="none" stroke="#c8c8c8" stroke-width="1.5"/>
<rect x="2351" y="260" width="7" height="7" fill="#8a8a8a" />
<rect x="2359" y="260" width="7" height="7" fill="#bdbdbd" />
<rect x="2367" y="260" width="7" height="7" fill="#8a8a8a" />
<rect x="2351" y="268" width="7" height="7" fill="#8a8a8a" />
<rect x="2359" y="268" width="7" height="7" fill="#9a9a9a" />
<rect x="2367" y="268" width="7" height="7" fill="#9a9a9a" />
<path d="M2357 312 L2371 312 L2370 326 L2358 326 Z" fill="#c8c8c8"/>
<path d="M2360 312 L2357 302 M2364 312 L2364 297 M2368 312 L2371 304" fill="none" stroke="#c8c8c8" stroke-width="2" stroke-width="1.6"/>
<ellipse cx="2355" cy="301" rx="3" ry="5" fill="#c8c8c8" transform="rotate(-20 2355 301)"/><path d="M2362 295 L2366 295 L2365 302 L2363 302 Z" fill="#c8c8c8"/><ellipse cx="2373" cy="302" rx="4" ry="3" fill="#c8c8c8"/>
<circle cx="2362.5" cy="347" r="6.5" fill="#c8c8c8"/><circle cx="2355.5" cy="356" r="6.5" fill="#c8c8c8"/><circle cx="2369.5" cy="356" r="6.5" fill="#c8c8c8"/>
<path d="M2361 356 L2359 366 L2366 366 L2364 356 Z" fill="#c8c8c8"/><rect x="2354" y="366" width="17" height="2" fill="#c8c8c8"/>
<rect x="2349" y="409" width="27" height="2" fill="#c8c8c8" />
<rect x="2349" y="416" width="27" height="3" fill="#c8c8c8" />
<rect x="2349" y="423" width="27" height="5" fill="#c8c8c8" />
<rect x="2349.5" y="453.5" width="26" height="18.5" fill="url(#g1)" stroke="#c8c8c8" stroke-width="1.5"/>
<circle cx="2359" cy="505" r="10" fill="#c8c8c8"/><circle cx="2365.5" cy="512" r="10" fill="#8c8c8c" stroke="#c8c8c8" stroke-width="1.3"/>
<circle cx="2363" cy="573" r="9" fill="#c8c8c8"/><circle cx="2363" cy="573" r="13" fill="none" stroke="#c8c8c8" stroke-width="1.5" stroke-dasharray="2.5,2.5"/>
<rect x="2357.5" y="605.5" width="18" height="18" fill="none" stroke="#c8c8c8" stroke-width="2" stroke-width="1.5"/>
<rect x="2349.5" y="617.5" width="8" height="8" fill="none" stroke="#c8c8c8" stroke-width="1.5"/><rect x="2353.5" y="621.5" width="8" height="8" fill="#535353" stroke="#c8c8c8" stroke-width="1.5"/>
<path d="M2357 670 L2350 670 L2350 693 L2373 693 L2373 685" fill="none" stroke="#c8c8c8" stroke-width="2" stroke-width="2.4"/>
<path d="M2362 682 L2376 668 M2368 667.5 L2377 667.5 L2377 676" fill="none" stroke="#c8c8c8" stroke-width="2" stroke-width="2.4"/>
<rect x="2349" y="731" width="16" height="17" fill="none" stroke="#c8c8c8" stroke-width="1.8"/>
<rect x="2356" y="741" width="20" height="17" fill="#535353" stroke="#c8c8c8" stroke-width="1.8"/>
<rect x="2395" y="121" width="63" height="43" fill="#474747" />
<rect x="2531" y="121" width="29" height="43" fill="#474747" />
<rect x="2395" y="163" width="165" height="1" fill="#4a4a4a" />
<rect x="2458" y="121" width="73" height="43" fill="#535353" />
<svg x="2395" y="121" width="62" height="43" style="overflow:hidden"><text x="14.7" y="24.7" font-size="14.5" fill="#a2a2a2" textLength="50" lengthAdjust="spacingAndGlyphs" >Proper</text></svg>
<text x="2471" y="145.7" font-size="14.5" fill="#f0f0f0" textLength="44" lengthAdjust="spacingAndGlyphs" stroke="#f0f0f0" stroke-width="0.6" >Layers</text>
<text x="2547" y="145.7" font-size="14.5" fill="#a2a2a2" textLength="14" lengthAdjust="spacingAndGlyphs" >Lil</text>
<rect x="2414.5" y="181.5" width="150" height="33" rx="2" fill="#474747" stroke="#404040" stroke-width="1"/>
<circle cx="2429.5" cy="195.5" r="5.8" fill="none" stroke="#c8c8c8" stroke-width="2"/><line x1="2433.5" y1="199.5" x2="2440" y2="206" stroke="#c8c8c8" stroke-width="2.4" stroke-linecap="round"/>
<text x="2458" y="204" font-size="15" fill="#505050" textLength="45" lengthAdjust="spacingAndGlyphs" >Search</text>
<rect x="2400" y="231" width="160" height="34" fill="#4b5a6c" />
<path d="M2410 246 C2414 240 2424 240 2428 246 C2424 252 2414 252 2410 246 Z" fill="#c8d0dc"/><circle cx="2419" cy="246" r="3" fill="#4b5a6c"/>
<rect x="2471" y="233" width="6" height="29" fill="#3b7be6" />
<polyline points="2490,240.5 2495.5,246 2490,251.5" fill="none" stroke="#d8dde4" stroke-width="2"/>
<rect x="2518.5" y="233.5" width="27" height="28" fill="#f4f4f4" stroke="#111" stroke-width="1.6"/>
<rect x="2527" y="240" width="12" height="20" fill="none" stroke="#b8b8b8" stroke-width="1.4"/><line x1="2527" y1="249" x2="2539" y2="249" stroke="#b8b8b8" stroke-width="1.4"/>
<rect x="2553" y="241" width="2.5" height="12" fill="#e8e8e8" />
<rect x="2403" y="1887" width="157" height="1.5" fill="#474747" />
<text x="2404" y="1908" font-size="15" fill="#d0d0d0" textLength="50" lengthAdjust="spacingAndGlyphs" stroke="#d0d0d0" stroke-width="0.4" >1 Layer</text>
<path d="M2478 1895 L2478 1912 M2478 1897 L2495 1897 M2478 1910 L2490 1910 M2495 1895 L2495 1903" fill="none" stroke="#c8c8c8" stroke-width="2" stroke-width="1.8"/>
<path d="M2489 1903 L2498 1903 L2498 1913 L2493.5 1909 L2489 1913 Z" fill="#c8c8c8"/>
<path d="M2521 1897 L2515 1897 L2515 1911 L2531 1911 L2531 1905" fill="none" stroke="#c8c8c8" stroke-width="2" stroke-width="1.8"/><path d="M2524 1904 L2534 1894 M2528 1894 L2534 1894 L2534 1900" fill="none" stroke="#c8c8c8" stroke-width="2" stroke-width="1.8"/>
<circle cx="201" cy="1872" r="11" fill="#d0d0d0"/>
<text x="201" y="1878.5" font-size="16" fill="#5a5a5a" font-weight="bold" text-anchor="middle" >?</text>
<text x="230" y="1879" font-size="16.5" fill="#c2c2c2" textLength="176" lengthAdjust="spacingAndGlyphs"><tspan font-weight="bold">Click</tspan><tspan stroke="#c2c2c2" stroke-width="0.35"> the object to select</tspan></text>
<rect x="417" y="1866" width="2" height="15" fill="#c2c2c2" />
<text x="431" y="1879" font-size="16.5" fill="#c2c2c2" textLength="258" lengthAdjust="spacingAndGlyphs"><tspan font-weight="bold">Shift+Click</tspan><tspan stroke="#c2c2c2" stroke-width="0.35"> to select multiple object</tspan></text>
<rect x="701" y="1866" width="2" height="15" fill="#c2c2c2" />
<text x="715" y="1879" font-size="16.5" fill="#c2c2c2" textLength="234" lengthAdjust="spacingAndGlyphs"><tspan font-weight="bold">Alt+Drag</tspan><tspan stroke="#c2c2c2" stroke-width="0.35"> the object to duplicate</tspan></text>
<rect x="189" y="1894" width="107" height="25" fill="#474747" />
<rect x="268" y="1894" width="1.5" height="25" fill="#535353" />
<text x="194.6" y="1915" font-size="15.5" fill="#e4e4e4" textLength="50.4" lengthAdjust="spacingAndGlyphs" >51.94%</text>
<polyline points="276,1906.5 281,1911.5 286,1906.5" fill="none" stroke="#d8d8d8" stroke-width="2"/>
<rect x="304" y="1894" width="106" height="25" fill="#474747" />
<rect x="381.5" y="1894" width="1.5" height="25" fill="#535353" />
<text x="308.6" y="1915" font-size="15.5" fill="#e4e4e4" textLength="15.7" lengthAdjust="spacingAndGlyphs" >0°</text>
<polyline points="391,1906.5 396,1911.5 401,1906.5" fill="none" stroke="#d8d8d8" stroke-width="2"/>
<path d="M425 1901 L425 1914 M437 1901 L428 1907.5 L437 1914 Z" fill="#666" stroke="#666" stroke-width="1.5"/>
<path d="M463 1901 L455 1907.5 L463 1914 Z" fill="#666"/>
<rect x="477" y="1894" width="91" height="25" fill="#474747" />
<rect x="540" y="1894" width="1.5" height="25" fill="#535353" />
<text x="481" y="1915" font-size="15.5" fill="#e4e4e4" textLength="8" lengthAdjust="spacingAndGlyphs" >1</text>
<polyline points="548,1906.5 553,1911.5 558,1906.5" fill="none" stroke="#d8d8d8" stroke-width="2"/>
<path d="M583 1901 L591 1907.5 L583 1914 Z" fill="#d8d8d8"/>
<path d="M605 1901 L613 1907.5 L605 1914 Z M615 1901 L617.5 1901 L617.5 1914 L615 1914 Z" fill="#d8d8d8"/>
<text x="761" y="1915" font-size="15.5" fill="#c8c8c8" textLength="62" lengthAdjust="spacingAndGlyphs" stroke="#c8c8c8" stroke-width="0.35" >Selection</text>
<rect x="950" y="1893" width="1" height="25" fill="#4a4a4a" />
<path d="M961 1901 L968 1907.5 L961 1914 Z" fill="#d8d8d8"/>
<rect x="978" y="1893" width="1324" height="25" fill="#4a4a4a" />
<polyline points="995,1901 989,1907 995,1913" fill="none" stroke="#a8a8a8" stroke-width="1.8"/>
<rect x="1607" y="1894" width="41" height="24" rx="11" fill="#5e5e5e"/>
<polyline points="2286,1900 2292,1906 2286,1912" fill="none" stroke="#a8a8a8" stroke-width="1.8"/>
</svg>
</body></html>
